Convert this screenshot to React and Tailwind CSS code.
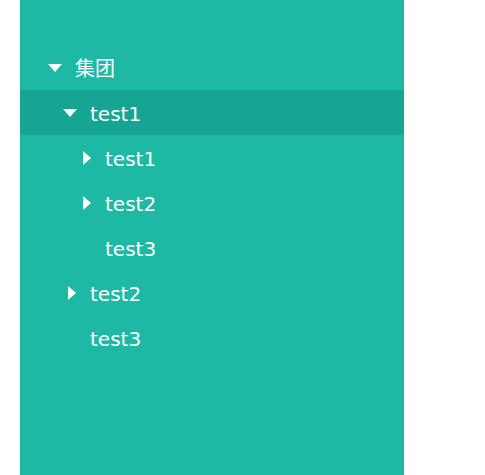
import React from "react";

const tree = [
  {
    label: "集团",
    open: true,
    children: [
      {
        label: "test1",
        open: true,
        active: true,
        children: [
          { label: "test1", children: [{ label: "a" }] },
          { label: "test2", children: [{ label: "a" }] },
          { label: "test3" },
        ],
      },
      { label: "test2", children: [{ label: "a" }] },
      { label: "test3" },
    ],
  },
];

function Caret({ open }) {
  return open ? (
    <svg width="14" height="8" viewBox="0 0 14 8" className="block shrink-0">
      <path d="M0 0 L14 0 L7 8 Z" fill="#fff" />
    </svg>
  ) : (
    <svg width="8" height="14" viewBox="0 0 8 14" className="block shrink-0">
      <path d="M0 0 L8 7 L0 14 Z" fill="#fff" />
    </svg>
  );
}

function Node({ node, depth }) {
  const hasChildren = node.children && node.children.length > 0;
  return (
    <>
      <div
        className={`flex h-[45px] items-center ${node.active ? "bg-[#15a592]" : ""}`}
        style={{ paddingLeft: 28 + depth * 15 }}
      >
        <div className="flex w-[27px] items-center">
          {hasChildren && (
            <span className={node.open ? "" : "pl-[5px]"}>
              <Caret open={node.open} />
            </span>
          )}
        </div>
        <span className="pt-[2px] text-[20px] leading-none text-white">{node.label}</span>
      </div>
      {hasChildren && node.open &&
        node.children.map((c, i) => <Node key={i} node={c} depth={depth + 1} />)}
    </>
  );
}

export default function App() {
  return (
    <div
      className="flex h-screen bg-white"
      style={{ fontFamily: '"DejaVu Sans", "Noto Sans CJK SC", sans-serif' }}
    >
      <div className="ml-[20px] w-[384px] bg-[#1eb9a4] pt-[45px]">
        {tree.map((n, i) => (
          <Node key={i} node={n} depth={0} />
        ))}
      </div>
    </div>
  );
}
